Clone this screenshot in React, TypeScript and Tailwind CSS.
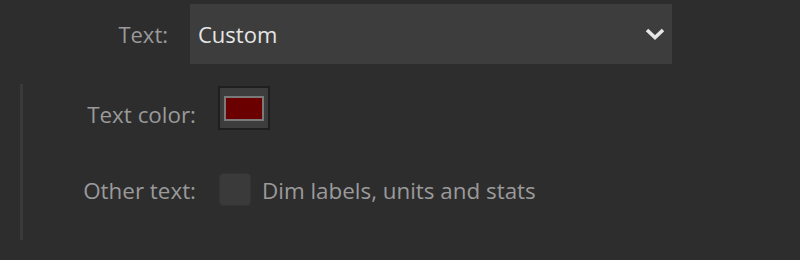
import React from "react";

export default function App() {
  return (
    <div
      className="w-[800px] h-[260px] bg-[#2d2d2d] overflow-hidden"
      style={{ fontFamily: '"Open Sans", "Noto Sans", sans-serif' }}
    >
      <div className="pt-[4px] flex items-center">
        <div className="w-[168px] text-right text-[22px] leading-[30px] text-[#9a9a9a]">Text:</div>
        <div className="ml-[22px] w-[482px] h-[60px] bg-[#3d3d3d] flex items-center justify-between pl-[8px] pr-[7px]">
          <span className="text-[22px] leading-[30px] text-[#e6e6e6]">Custom</span>
          <svg width="20" height="14" viewBox="0 0 20 14">
            <path d="M2 3 L10 10.5 L18 3" fill="none" stroke="#e6e6e6" strokeWidth="3.6" />
          </svg>
        </div>
      </div>
      <div className="mt-[20px] ml-[20px] h-[156px] border-l-[3px] border-[#3a3a3a]">
        <div className="pt-[2px] flex items-center">
          <div className="w-[173px] text-right text-[22.4px] leading-[30px] text-[#9a9a9a] pt-[14px]">Text color:</div>
          <div className="ml-[22px] w-[52px] h-[44px] bg-[#3d3d3d] border-2 border-[#1f1f1f] flex items-center justify-center">
            <div className="w-[40px] h-[25px] bg-[#6b0000] border-2 border-[#7a7a7a]" />
          </div>
        </div>
        <div className="mt-[43px] flex items-center">
          <div className="w-[173px] text-right text-[22.4px] leading-[30px] text-[#9a9a9a] pt-[2px]">Other text:</div>
          <div className="ml-[23px] w-[32px] h-[33px] bg-[#3a3a3a] rounded-[4px] border border-[#333]" />
          <div className="ml-[11px] text-[22.4px] leading-[30px] text-[#9a9a9a] pt-[2px]">Dim labels, units and stats</div>
        </div>
      </div>
    </div>
  );
}
